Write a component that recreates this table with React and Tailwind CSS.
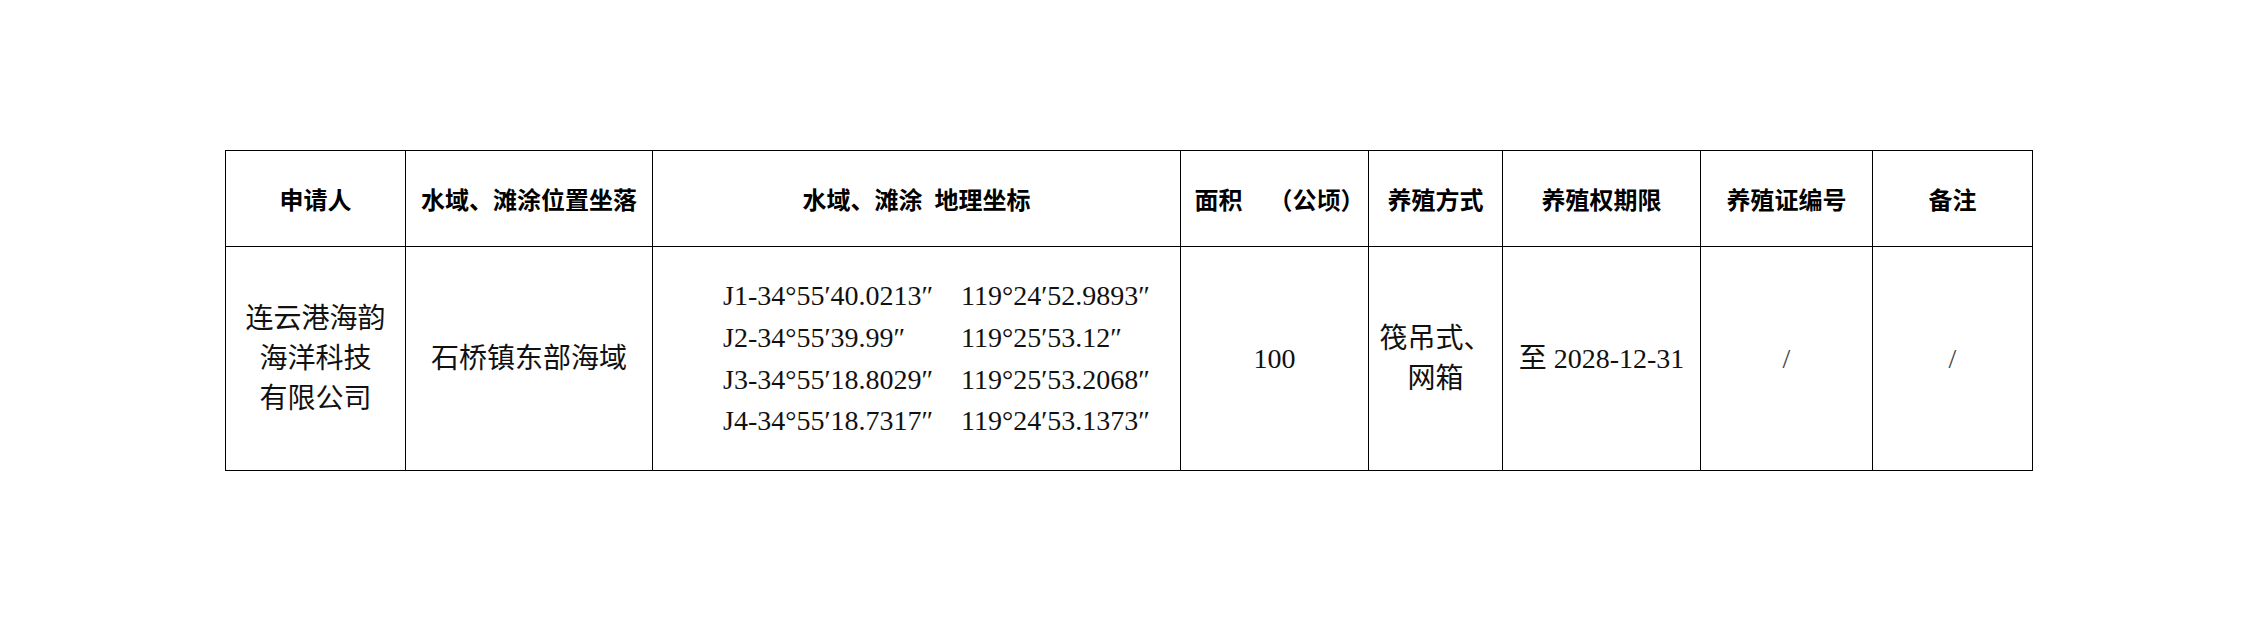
const SANS = "font-['Liberation_Serif','Noto_Sans_CJK_SC',serif]";

const COLS = [180, 247, 528, 188, 134, 198, 172, 160];

const COORDS = [
  ["J1-34°55′40.0213″", "119°24′52.9893″"],
  ["J2-34°55′39.99″", "119°25′53.12″"],
  ["J3-34°55′18.8029″", "119°25′53.2068″"],
  ["J4-34°55′18.7317″", "119°24′53.1373″"],
];

function Th({ children, className = "" }) {
  return (
    <th className={`border border-black p-0 text-center align-middle text-[24px] font-bold leading-[30px] text-black font-['Noto_Sans_CJK_SC',sans-serif] ${className}`}>
      {children}
    </th>
  );
}

function Td({ children, className = "" }) {
  return (
    <td className={`border border-black p-0 text-center align-middle text-[28px] text-[#111] ${className}`}>
      {children}
    </td>
  );
}

export default function App() {
  return (
    <div className={`min-h-[620px] w-[2245px] bg-white pl-[225px] pt-[150px] ${SANS}`}>
      <table className="w-[1807px] table-fixed border-collapse">
        <colgroup>
          {COLS.map((w, i) => (
            <col key={i} style={{ width: w }} />
          ))}
        </colgroup>
        <thead>
          <tr className="h-[96px]">
            <Th>申请人</Th>
            <Th>水域、滩涂位置坐落</Th>
            <Th>
              水域、滩涂<span className="inline-block w-[12px]" />地理坐标
            </Th>
            <Th className="pl-[10px]">
              面积<span className="inline-block w-[26px]" />（公顷）
            </Th>
            <Th>养殖方式</Th>
            <Th>养殖权期限</Th>
            <Th>养殖证编号</Th>
            <Th>备注</Th>
          </tr>
        </thead>
        <tbody>
          <tr className="h-[224px]">
            <Td className="leading-[40px]">
              连云港海韵
              <br />
              海洋科技
              <br />
              有限公司
            </Td>
            <Td>石桥镇东部海域</Td>
            <Td className="text-left">
              <div className="grid grid-cols-[238px_auto] pl-[70px] leading-[41.6px]">
                {COORDS.map(([lat, lng]) => (
                  <div key={lat} className="contents">
                    <span>{lat}</span>
                    <span>{lng}</span>
                  </div>
                ))}
              </div>
            </Td>
            <Td>100</Td>
            <Td className="leading-[40px]">
              筏吊式、
              <br />
              网箱
            </Td>
            <Td>至 2028-12-31</Td>
            <Td className="text-[#444]">/</Td>
            <Td className="text-[#444]">/</Td>
          </tr>
        </tbody>
      </table>
    </div>
  );
}
